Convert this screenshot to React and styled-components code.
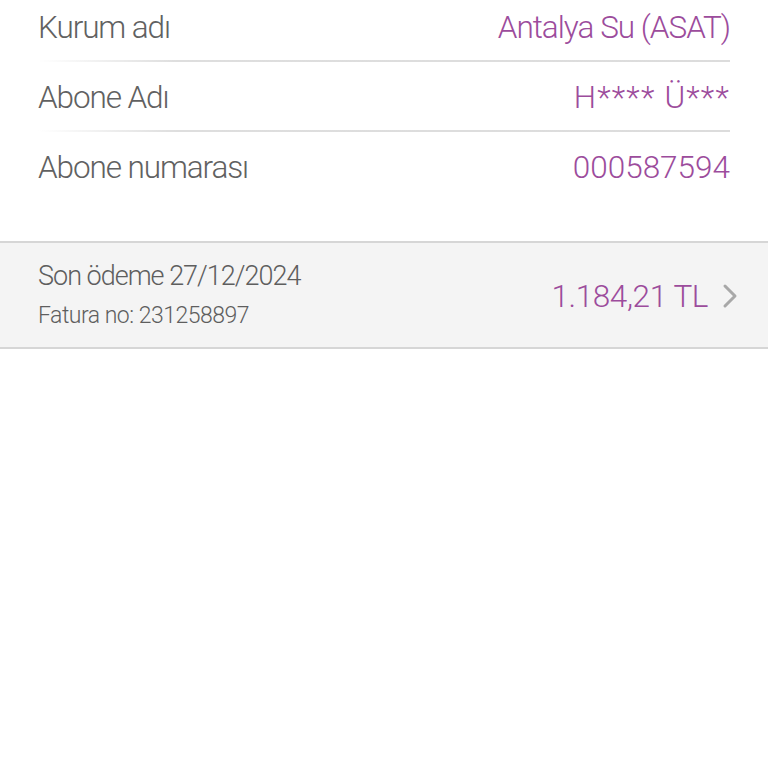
import React from "react";
import styled, { createGlobalStyle } from "styled-components";

const GlobalStyle = createGlobalStyle`
  body {
    margin: 0;
    background: #fff;
    font-family: "Roboto", "Liberation Sans", sans-serif;
  }
`;

const Page = styled.div`
  width: 768px;
  min-height: 768px;
  background: #fff;
`;

const InfoList = styled.div`
  padding: 0 38px;
  margin-bottom: 39px;
`;

const InfoRow = styled.div`
  display: flex;
  justify-content: space-between;
  align-items: center;
  height: 69px;
  margin-top: ${(p) => (p.first ? "-7px" : "0")};
  position: relative;
  &:not(:last-child)::after {
    content: "";
    position: absolute;
    left: 0;
    right: 0;
    bottom: 0;
    height: 2px;
    background: linear-gradient(to right, rgba(220,220,220,0) 0%, #dedede 20%, #dcdcdc 100%);
  }
  & + & {
    margin-top: 1px;
  }
`;

const Label = styled.span`
  font-size: 31.5px;
  font-weight: 300;
  color: #616161;
  letter-spacing: -1.1px;
`;

const Value = styled.span`
  font-size: 31.5px;
  font-weight: 300;
  color: #9c4c9c;
  letter-spacing: ${(p) => p.spacing};
`;

const BillBar = styled.div`
  display: flex;
  align-items: center;
  justify-content: space-between;
  height: 104px;
  padding: 0 30px 0 38px;
  background: #f4f4f4;
  border-top: 2px solid #d6d6d6;
  border-bottom: 2px solid #d6d6d6;
`;

const BillInfo = styled.div`
  display: flex;
  flex-direction: column;
  gap: 10px;
  margin-top: -2px;
`;

const DueDate = styled.span`
  font-size: 27px;
  font-weight: 300;
  color: #5e5e5e;
  letter-spacing: -1px;
`;

const InvoiceNo = styled.span`
  font-size: 23px;
  font-weight: 300;
  color: #5e5e5e;
  letter-spacing: -0.5px;
`;

const Amount = styled.div`
  display: flex;
  align-items: center;
  gap: 14px;
  margin-top: 2px;
  font-size: 31.5px;
  font-weight: 300;
  color: #9c4c9c;
  letter-spacing: -0.4px;
`;

const Chevron = () => (
  <svg width="16" height="26" viewBox="0 0 16 26" fill="none">
    <path d="M3 3 L13 13 L3 23" stroke="#a8a8a8" strokeWidth="3" strokeLinecap="round" strokeLinejoin="round" />
  </svg>
);

const rows = [
  { label: "Kurum adı", value: "Antalya Su (ASAT)", spacing: "-1px" },
  { label: "Abone Adı", value: "H**** Ü***", spacing: "1.2px" },
  { label: "Abone numarası", value: "000587594", spacing: "0px" },
];

export default function App() {
  return (
    <Page>
      <GlobalStyle />
      <InfoList>
        {rows.map((r, i) => (
          <InfoRow key={r.label} first={i === 0}>
            <Label>{r.label}</Label>
            <Value spacing={r.spacing}>{r.value}</Value>
          </InfoRow>
        ))}
      </InfoList>
      <BillBar>
        <BillInfo>
          <DueDate>Son ödeme 27/12/2024</DueDate>
          <InvoiceNo>Fatura no: 231258897</InvoiceNo>
        </BillInfo>
        <Amount>
          1.184,21 TL
          <Chevron />
        </Amount>
      </BillBar>
    </Page>
  );
}
